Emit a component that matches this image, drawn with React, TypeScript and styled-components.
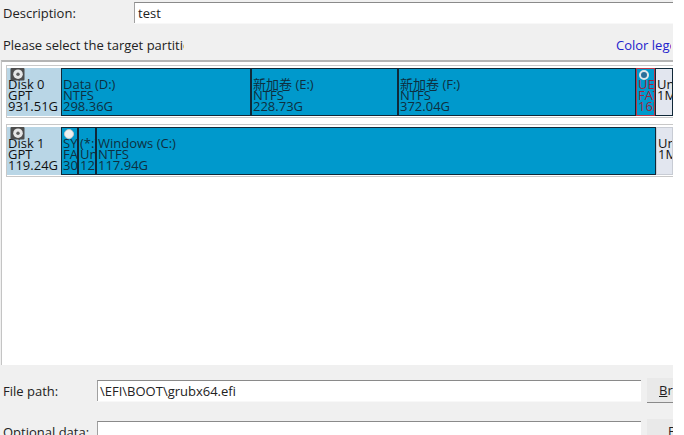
import * as React from 'react'
import styled, { createGlobalStyle } from 'styled-components'

const GlobalStyle = createGlobalStyle`
    html, body {
        margin: 0;
        padding: 0;
        background: #fff;
    }
`

const Page = styled.div`
    width: 673px;
    height: 435px;
    overflow: hidden;
    background: #f0f0f0;
    font-family: 'Open Sans', 'Noto Sans CJK SC', sans-serif;
    font-size: 13px;
    color: #222;
    display: flex;
    flex-direction: column;
    padding-top: 2px;
    box-sizing: border-box;
`

const FieldRow = styled.div<{ labelWidth: number }>`
    display: grid;
    grid-template-columns: ${({ labelWidth }) => labelWidth}px 1fr;
    align-items: center;
    padding-left: 3px;
    flex: none;
`

const FieldInput = styled.div`
    height: 20px;
    background: #fff;
    border-top: 1px solid #8a8a8a;
    border-left: 1px solid #a0a0a0;
    box-shadow: 0 1px 0 #f8f8f8;
    padding-left: 2px;
    line-height: 20px;
    white-space: nowrap;
`

const DescriptionInput = styled(FieldInput)`
    padding-left: 3px;
`

const SelectRow = styled.div`
    display: flex;
    justify-content: space-between;
    margin-top: 13px;
    padding: 0 2px 0 3px;
    height: 18px;
    line-height: 18px;
    flex: none;
`

const Cut = styled.span`
    width: 181px;
    overflow: hidden;
    white-space: nowrap;
`

const LegendLink = styled.span`
    color: #2222cc;
    width: 55px;
    overflow: hidden;
    white-space: nowrap;
`

const Panel = styled.div`
    margin-top: 6px;
    margin-left: 1px;
    height: 305px;
    flex: none;
    box-sizing: border-box;
    background: #fff;
    border-top: 2px solid #b4b4b4;
    border-left: 1px solid #c4c4c4;
    padding-top: 3px;
    display: flex;
    flex-direction: column;
    gap: 6px;
`

const DiskRow = styled.div`
    margin-left: 4px;
    height: 53px;
    flex: none;
    box-sizing: border-box;
    border-top: 1px solid #c8c8c8;
    border-bottom: 1px solid #c8c8c8;
    border-left: 1px solid #c8c8c8;
    padding: 2px 0;
    display: flex;
    background: #fff;
`

const cellText = `
    font-size: 13px;
    line-height: 10.5px;
    white-space: nowrap;
    overflow: hidden;
    box-sizing: border-box;
    height: 48px;
    position: relative;
`

const DiskCell = styled.div`
    ${cellText}
    width: 54px;
    flex: none;
    background: #b9d6e6;
    padding: 11px 0 0 1px;
    color: #111;
`

const Partition = styled.div<{ w: number; selected?: boolean; free?: boolean; soft?: boolean }>`
    ${cellText}
    width: ${({ w }) => w}px;
    flex: none;
    padding: 10px 0 0 1px;
    background: ${({ free }) => (free ? '#e2e6ef' : '#0099cc')};
    color: ${({ selected, free }) => (selected ? '#a0243c' : free ? '#111' : '#0e2f40')};
    border: 1px solid
        ${({ selected, soft }) => (selected ? '#b8384a' : soft ? '#c8ccd4' : '#102838')};
`

const Name = styled.div`
    height: 11px;
`

const DiskIcon = styled.svg`
    position: absolute;
    left: 3px;
    top: 0;
`

const Radio = styled.span<{ checked?: boolean }>`
    position: absolute;
    left: 2px;
    top: 1px;
    width: 10px;
    height: 10px;
    box-sizing: border-box;
    border-radius: 50%;
    background: ${({ checked }) => (checked ? '#2a6f9a' : '#efefef')};
    border: ${({ checked }) => (checked ? '2px solid #dfe6ea' : '1px solid #c8c8c8')};
`

const PathRow = styled.div`
    display: grid;
    grid-template-columns: 94px 544px 1fr;
    align-items: center;
    padding-left: 3px;
    height: 25px;
    margin-top: 13px;
    flex: none;
`

const SideButton = styled.div<{ textInset: number }>`
    margin-left: 6px;
    height: 25px;
    box-sizing: border-box;
    background: #e9e9e9;
    border-bottom: 1px solid #8a8a8a;
    line-height: 24px;
    padding-left: ${({ textInset }) => textInset}px;
    overflow: hidden;
    white-space: nowrap;
`

const Underlined = styled.span`
    text-decoration: underline;
`

const OptionalRow = styled(PathRow)`
    margin-top: 16px;
`

type Part = {
    w: number
    name: string
    fs: string
    size: string
    selected?: boolean
    free?: boolean
    soft?: boolean
    radio?: 'on' | 'off'
}

const disks: Array<{ name: string; size: string; parts: Part[] }> = [
    {
        name: 'Disk 0',
        size: '931.51G',
        parts: [
            { w: 190, name: 'Data (D:)', fs: 'NTFS', size: '298.36G' },
            { w: 147, name: '新加卷 (E:)', fs: 'NTFS', size: '228.73G' },
            { w: 238, name: '新加卷 (F:)', fs: 'NTFS', size: '372.04G' },
            { w: 19, name: 'UEFI', fs: 'FAT32', size: '16MB', selected: true, radio: 'on' },
            { w: 18, name: 'Unalloc', fs: '1MB', size: '', free: true },
        ],
    },
    {
        name: 'Disk 1',
        size: '119.24G',
        parts: [
            { w: 17, name: 'SYSTEM', fs: 'FAT32', size: '300M', radio: 'off' },
            { w: 18, name: '(*:)', fs: 'Unknown', size: '12M' },
            { w: 560, name: 'Windows (C:)', fs: 'NTFS', size: '117.94G' },
            { w: 17, name: 'Unalloc', fs: '1MB', size: '', free: true, soft: true },
        ],
    },
]

const HddIcon = () => (
    <DiskIcon width="15" height="13" viewBox="0 0 15 13">
        <rect x="0.5" y="0" width="14" height="12.5" rx="1" fill="#4d4d4d" />
        <circle cx="8" cy="6.2" r="4.8" fill="#e6e6e6" />
        <circle cx="8" cy="6.2" r="1.7" fill="#5c5c5c" />
    </DiskIcon>
)

export default function App() {
    return (
        <>
            <GlobalStyle />
            <Page>
                <FieldRow labelWidth={131}>
                    <span>Description:</span>
                    <DescriptionInput>test</DescriptionInput>
                </FieldRow>
                <SelectRow>
                    <Cut>Please select the target partition</Cut>
                    <LegendLink>Color legend</LegendLink>
                </SelectRow>
                <Panel>
                    {disks.map(disk => (
                        <DiskRow key={disk.name}>
                            <DiskCell>
                                <HddIcon />
                                <Name>{disk.name}</Name>
                                <div>GPT</div>
                                <div>{disk.size}</div>
                            </DiskCell>
                            {disk.parts.map(part => (
                                <Partition
                                    key={part.name}
                                    w={part.w}
                                    selected={part.selected}
                                    free={part.free}
                                    soft={part.soft}
                                >
                                    {part.radio && <Radio checked={part.radio === 'on'} />}
                                    <Name>{part.name}</Name>
                                    <div>{part.fs}</div>
                                    <div>{part.size}</div>
                                </Partition>
                            ))}
                        </DiskRow>
                    ))}
                </Panel>
                <PathRow>
                    <span>File path:</span>
                    <FieldInput>\EFI\BOOT\grubx64.efi</FieldInput>
                    <SideButton textInset={12}>
                        <Underlined>B</Underlined>rowse
                    </SideButton>
                </PathRow>
                <OptionalRow>
                    <span>Optional data:</span>
                    <FieldInput />
                    <SideButton textInset={21}>Fill</SideButton>
                </OptionalRow>
            </Page>
        </>
    )
}
